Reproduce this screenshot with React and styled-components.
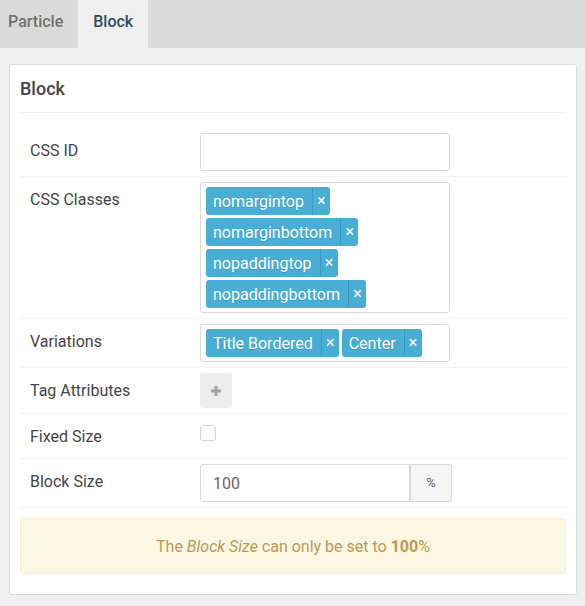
import React, { useState } from "react";
import styled, { createGlobalStyle } from "styled-components";

const GlobalStyle = createGlobalStyle`
  *, *::before, *::after { box-sizing: border-box; }
  body {
    margin: 0;
    background: #efefef;
    color: #444;
    font: 400 16px/24px Roboto, "Liberation Sans", sans-serif;
  }
  button, input { font: inherit; color: inherit; }
`;

const TabBar = styled.nav`
  display: flex;
  height: 48px;
  background: #dadada;
`;

const Tab = styled.button`
  border: 0;
  margin: 0;
  padding: 0 15px 4px;
  font-weight: 500;
  cursor: pointer;
  color: ${({ $active }) => ($active ? "#314d59" : "#6f6f6f")};
  background: ${({ $active }) => ($active ? "#efefef" : "transparent")};

  &:first-child { padding-left: 8px; }
`;

const Card = styled.form`
  margin: 16px 8px 11px 9px;
  padding: 10px 10px 20px;
  border: 1px solid #dadada;
  border-radius: 3px;
  background: #fff;
`;

const CardTitle = styled.h1`
  margin: 0 0 15px;
  padding-bottom: 10px;
  border-bottom: 1px solid #eee;
  font-size: 18px;
  font-weight: 500;
  line-height: 27px;
`;

const Row = styled.div`
  display: flex;
  align-items: flex-start;
  padding: 5px 10px;
  border-bottom: 1px solid #f2f2f2;
`;

const Label = styled.label`
  flex: 0 0 170px;
  padding: 6px 0 4px;
`;

const TextInput = styled.input`
  width: 250px;
  height: 38px;
  padding: 0 12px;
  border: 1px solid #d9d9d9;
  border-radius: 3px;
  background: #fff;
  outline: 0;
`;

const TagField = styled.div`
  display: flex;
  flex-wrap: wrap;
  gap: 3px;
  width: 250px;
  padding: 4px 5px;
  border: 1px solid #d9d9d9;
  border-radius: 3px;
`;

const TagPill = styled.span`
  display: flex;
  height: 28px;
  padding-left: 7px;
  border-radius: 3px;
  background: #48aed6;
  color: #fff;
  line-height: 29px;
  text-shadow: 0 1px 0 rgba(0, 0, 0, 0.12);
`;

const RemoveButton = styled.button`
  width: 18px;
  margin-left: 8px;
  padding: 0;
  border: 0;
  border-left: 1px solid #3b99be;
  background: none;
  color: #fff;
  line-height: 28px;
  cursor: pointer;
`;

const AddButton = styled.button`
  display: grid;
  place-items: center;
  width: 32px;
  height: 35px;
  padding: 0;
  border: 0;
  border-radius: 3px;
  background: #ededed;
  color: #a0a0a0;
  cursor: pointer;
`;

const CheckCell = styled.div`
  height: 34px;
  padding-top: 6px;
`;

const Checkbox = styled.input`
  appearance: none;
  display: block;
  width: 16px;
  height: 16px;
  margin: 0;
  border: 1px solid #d3d3d3;
  border-radius: 3px;
  background: #fff;

  &:checked { background: #48aed6; }
`;

const InputGroup = styled.div`
  display: flex;
  width: 252px;
`;

const GroupInput = styled(TextInput)`
  flex: 1;
  min-width: 0;
  border-radius: 3px 0 0 3px;
  color: #666;
`;

const Addon = styled.span`
  width: 42px;
  border: 1px solid #d9d9d9;
  border-radius: 0 3px 3px 0;
  background: #f5f5f5;
  color: #666;
  font-size: 13px;
  line-height: 36px;
  text-align: center;
`;

const Notice = styled.p`
  margin: 10px 0 0;
  padding: 16px 15px 14px;
  border: 1px solid #faebcc;
  border-radius: 3px;
  background: #fcf7e3;
  color: #c09853;
  text-align: center;
`;

function TagList({ initial, labelledBy }) {
  const [tags, setTags] = useState(initial);
  return (
    <TagField role="group" aria-labelledby={labelledBy}>
      {tags.map((tag) => (
        <TagPill key={tag}>
          {tag}
          <RemoveButton
            type="button"
            aria-label={`Remove ${tag}`}
            onClick={() => setTags(tags.filter((t) => t !== tag))}
          >
            ×
          </RemoveButton>
        </TagPill>
      ))}
    </TagField>
  );
}

export default function App() {
  const [tab, setTab] = useState("Block");
  return (
    <>
      <GlobalStyle />
      <TabBar>
        {["Particle", "Block"].map((name) => (
          <Tab key={name} type="button" $active={tab === name} onClick={() => setTab(name)}>
            {name}
          </Tab>
        ))}
      </TabBar>
      <Card>
        <CardTitle>Block</CardTitle>
        <Row>
          <Label htmlFor="css-id">CSS ID</Label>
          <TextInput id="css-id" type="text" />
        </Row>
        <Row>
          <Label as="span" id="css-classes">CSS Classes</Label>
          <TagList
            labelledBy="css-classes"
            initial={["nomargintop", "nomarginbottom", "nopaddingtop", "nopaddingbottom"]}
          />
        </Row>
        <Row>
          <Label as="span" id="variations">Variations</Label>
          <TagList labelledBy="variations" initial={["Title Bordered", "Center"]} />
        </Row>
        <Row>
          <Label as="span" id="tag-attributes">Tag Attributes</Label>
          <AddButton type="button" aria-labelledby="tag-attributes">
            <svg width="10" height="10" viewBox="0 0 10 10" aria-hidden="true">
              <path d="M3.5 0h3v3.5H10v3H6.5V10h-3V6.5H0v-3h3.5z" fill="currentColor" />
            </svg>
          </AddButton>
        </Row>
        <Row>
          <Label htmlFor="fixed-size">Fixed Size</Label>
          <CheckCell>
            <Checkbox id="fixed-size" type="checkbox" />
          </CheckCell>
        </Row>
        <Row>
          <Label htmlFor="block-size">Block Size</Label>
          <InputGroup>
            <GroupInput id="block-size" type="text" defaultValue="100" />
            <Addon>%</Addon>
          </InputGroup>
        </Row>
        <Notice>
          The <em>Block Size</em> can only be set to <strong>100</strong>%
        </Notice>
      </Card>
    </>
  );
}
